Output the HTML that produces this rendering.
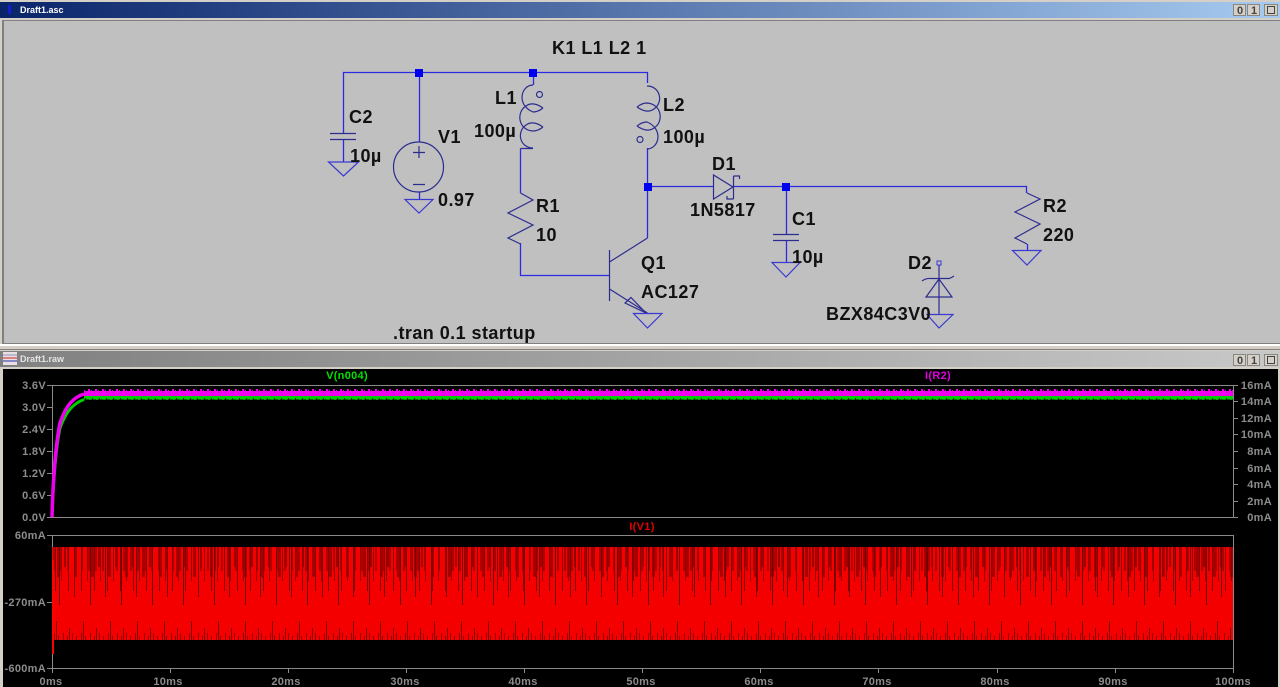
<!DOCTYPE html>
<html><head><meta charset="utf-8"><title>Draft1</title>
<style>
html,body{margin:0;padding:0;background:#d4d0c8;width:1280px;height:687px;overflow:hidden}
svg{display:block;filter:blur(.35px)}
.s{font:bold 18px "Liberation Sans",sans-serif;fill:#111;letter-spacing:.45px}
.a{font:bold 11px "Liberation Sans",sans-serif;fill:#8c8c8c;letter-spacing:.3px}
.t{font:bold 9px "Liberation Sans",sans-serif;fill:#fff}
.b{font:bold 11px "Liberation Sans",sans-serif;fill:#444;text-anchor:middle}
.w{stroke:#2a2ae0;fill:none;stroke-width:1.3}
.c{stroke:#2c2c90;fill:none;stroke-width:1.2}
.g{stroke:#3a3ad0;fill:none;stroke-width:1.2}
.j{fill:#0000f0}
.e{text-anchor:end}
.m{text-anchor:middle}
.x{stroke:#8a8a8a;fill:none;stroke-width:1}
.btn{fill:#d4d0c8;stroke:#8a8780}
</style></head><body>
<svg width="1280" height="687" viewBox="0 0 1280 687" xmlns="http://www.w3.org/2000/svg">
<defs>
<linearGradient id="t1" x1="0" x2="1" y1="0" y2="0"><stop offset="0" stop-color="#0a246a"/><stop offset="1" stop-color="#a6caf0"/></linearGradient>
<linearGradient id="t2" x1="0" x2="1" y1="0" y2="0"><stop offset="0" stop-color="#808080"/><stop offset="1" stop-color="#c8c8c8"/></linearGradient>
<pattern id="pa" patternUnits="userSpaceOnUse" x="52" y="547" width="7" height="93"><rect x="1" y="0" width="2" height="24" fill="#b00000"/></pattern>
<pattern id="pf" patternUnits="userSpaceOnUse" x="52" y="547" width="17" height="93"><rect x="5" y="0" width="3" height="30" fill="#a80000"/><rect x="12" y="0" width="2" height="20" fill="#a00000"/></pattern>
<pattern id="pb" patternUnits="userSpaceOnUse" x="52" y="547" width="13" height="93"><rect x="3" y="0" width="1" height="44" fill="#850000"/><rect x="9" y="0" width="1" height="34" fill="#950000"/></pattern>
<pattern id="pc" patternUnits="userSpaceOnUse" x="52" y="547" width="31" height="93"><rect x="7" y="0" width="1" height="58" fill="#700000"/><rect x="22" y="0" width="1" height="50" fill="#780000"/></pattern>
<pattern id="pd" patternUnits="userSpaceOnUse" x="52" y="547" width="9" height="93"><rect x="2" y="86" width="1" height="7" fill="#900000"/><rect x="6" y="89" width="1" height="4" fill="#900000"/></pattern>
<pattern id="pe" patternUnits="userSpaceOnUse" x="52" y="547" width="27" height="93"><rect x="4" y="74" width="1" height="19" fill="#800000"/><rect x="17" y="81" width="1" height="12" fill="#800000"/></pattern>
<pattern id="pm" patternUnits="userSpaceOnUse" x="52" y="388" width="7" height="13"><rect x="1" y="1" width="2" height="2" fill="#e800e8"/><rect x="4" y="2" width="1" height="1" fill="#e800e8"/><rect x="2" y="11" width="2" height="1" fill="#00a800"/><rect x="5" y="10" width="1" height="2" fill="#002800"/></pattern>
</defs>

<!-- schematic window -->
<rect x="0" y="2" width="1280" height="16" fill="url(#t1)"/>
<rect x="8" y="5" width="3" height="9" fill="#1020d0"/>
<text class="t" x="20" y="13">Draft1.asc</text>
<rect x="2" y="20" width="1278" height="325" fill="#808080"/>
<rect x="4" y="21" width="1276" height="322" fill="#c0c0c0"/>
<rect x="0" y="344" width="1280" height="2" fill="#ffffff"/>
<rect x="0" y="349" width="1280" height="1" fill="#808080"/>

<!-- title buttons -->
<rect class="btn" x="1233.5" y="4.5" width="12" height="11"/><text class="b" x="1240" y="14">0</text>
<rect class="btn" x="1247.5" y="4.5" width="12" height="11"/><text class="b" x="1254" y="14">1</text>
<rect class="btn" x="1264.5" y="4.5" width="13" height="11"/><rect x="1267.5" y="6.5" width="7" height="7" fill="none" stroke="#444"/>

<!-- wires -->
<path class="w" d="M343.5 133V72.5H647.5V83M343.5 139V162M419.5 72.5V142M533.5 72.5V85M520.5 148.5V193M520.5 243V275.5H609M647.5 148V238M647.5 186.5H713M733 186.5H1026.5V193M786.5 186.5V234M786.5 240V262M1027.5 244V250M419.5 192V199"/>

<!-- C2 -->
<path class="c" d="M330 133.5H356M330 139.5H356"/>
<path class="g" d="M328.5 162H358.5L343.5 176Z"/>
<!-- V1 -->
<circle class="c" cx="418.5" cy="167" r="25"/>
<path class="c" d="M419 146V158M413 152.5H425M413 184.5H425"/>
<path class="g" d="M405 199.5H433L419 213Z"/>
<!-- L1 -->
<path class="c" d="M533 85C521 85 516 105 533 112Q538 112 543 108M543 108Q533 101 526 106C516 112 518 130 533 131Q538 131 543 127M543 127Q533 120 526 125C516 132 520 148 533 148M520.5 148.5H533"/>
<circle class="c" cx="539.5" cy="94.5" r="3"/>
<!-- L2 -->
<path class="c" d="M647 149C659 149 664 129 647 122Q642 122 637 126M637 126Q647 133 654 128C664 122 662 104 647 103Q642 103 637 107M637 107Q647 114 654 109C664 102 660 86 647 86"/>
<circle class="c" cx="640" cy="139.5" r="3"/>
<!-- R1 -->
<path class="c" d="M520.5 193L533 200L508 213L533 225L508 238L520.5 244"/>
<!-- Q1 -->
<path class="c" d="M609.5 250V301M609.5 262L647.5 238M609.5 289L647.5 313"/>
<path class="c" d="M646 313L625 303L631 297.5Z"/>
<path class="g" d="M633.5 313.5H662L647.5 328Z"/>
<!-- D1 -->
<path class="c" d="M713.5 175V199L733 187ZM733.5 176V199M733.5 176H739.5V179M733.5 199H727V196"/>
<!-- C1 -->
<path class="c" d="M773 234.5H799M773 240.5H799"/>
<path class="g" d="M772 262.5H800L786 277Z"/>
<!-- R2 -->
<path class="c" d="M1027 193L1040 199L1015 212L1040 224L1015 238L1027 244"/>
<path class="g" d="M1012.5 250.5H1041L1027 265Z"/>
<!-- D2 -->
<rect x="937" y="261" width="4" height="4" fill="none" stroke="#3a3ad8"/>
<path class="c" d="M939 265V297M939 297V314M922 281Q926 278 931 278.5H949Q951 278 954 276M939 279L926 297H952Z"/>
<path class="g" d="M927 314.5H953L939 328Z"/>
<!-- junctions -->
<rect class="j" x="415" y="69" width="8" height="8"/>
<rect class="j" x="529" y="69" width="8" height="8"/>
<rect class="j" x="644" y="183" width="8" height="8"/>
<rect class="j" x="782" y="183" width="8" height="8"/>

<!-- schematic labels -->
<text class="s" x="552" y="54">K1 L1 L2 1</text>
<text class="s" x="349" y="123">C2</text>
<text class="s" x="350" y="162">10µ</text>
<text class="s" x="438" y="143">V1</text>
<text class="s" x="438" y="206">0.97</text>
<text class="s" x="495" y="104">L1</text>
<text class="s" x="474" y="137">100µ</text>
<text class="s" x="663" y="111">L2</text>
<text class="s" x="663" y="143">100µ</text>
<text class="s" x="712" y="170">D1</text>
<text class="s" x="690" y="216">1N5817</text>
<text class="s" x="536" y="212">R1</text>
<text class="s" x="536" y="241">10</text>
<text class="s" x="641" y="269">Q1</text>
<text class="s" x="641" y="298">AC127</text>
<text class="s" x="792" y="225">C1</text>
<text class="s" x="792" y="263">10µ</text>
<text class="s" x="1043" y="212">R2</text>
<text class="s" x="1043" y="241">220</text>
<text class="s" x="908" y="269">D2</text>
<text class="s" x="826" y="320">BZX84C3V0</text>
<text class="s" x="393" y="339">.tran 0.1 startup</text>

<!-- waveform window -->
<rect x="0" y="351" width="1280" height="16" fill="url(#t2)"/>
<rect x="3" y="352" width="14" height="13" fill="#e8e0e0"/>
<path d="M3 358H17" stroke="#d02020" stroke-width="1"/><path d="M3 361H17" stroke="#2030b0" stroke-width="1"/><path d="M3 355H17" stroke="#9090c0" stroke-width="1"/>
<text class="t" x="20" y="362" style="fill:#e4e4e4">Draft1.raw</text>
<rect class="btn" x="1233.5" y="354.5" width="12" height="11"/><text class="b" x="1240" y="364">0</text>
<rect class="btn" x="1247.5" y="354.5" width="12" height="11"/><text class="b" x="1254" y="364">1</text>
<rect class="btn" x="1264.5" y="354.5" width="13" height="11"/><rect x="1267.5" y="356.5" width="7" height="7" fill="none" stroke="#444"/>
<rect x="3" y="369" width="1275" height="318" fill="#000"/>

<!-- frames -->
<path class="x" d="M52.5 385.5H1233.5V517.5H52.5ZM52.5 535.5H1233.5V668.5H52.5Z"/>
<path class="x" d="M47 385.5H52M47 407.5H52M47 429.5H52M47 451.5H52M47 473.5H52M47 495.5H52M47 517.5H52M47 535.5H52M47 602.5H52M47 668.5H52M1233 385.5H1238M1233 401.5H1238M1233 418.5H1238M1233 434.5H1238M1233 451.5H1238M1233 468.5H1238M1233 484.5H1238M1233 501.5H1238M1233 517.5H1238M52.5 668V673M170.5 668V673M288.5 668V673M406.5 668V673M524.5 668V673M642.5 668V673M760.5 668V673M878.5 668V673M997.5 668V673M1115.5 668V673M1233.5 668V673"/>

<!-- top traces -->
<path d="M52 517C53 482 56 447 60 428C66 411 74 403 84 399.5" stroke="#00d000" stroke-width="3" fill="none"/>
<path d="M52 517C53 478 56 442 60 423C66 405 74 397 84 394" stroke="#f000f0" stroke-width="3.5" fill="none"/>
<rect x="84" y="396" width="1149" height="3.5" fill="#00d000"/>
<rect x="84" y="391" width="1149" height="5" fill="#f000f0"/>
<rect x="84" y="388" width="1149" height="13" fill="url(#pm)"/>

<!-- bottom trace -->
<rect x="52" y="547" width="1181" height="93" fill="#f40000"/>
<rect x="52" y="547" width="1181" height="93" fill="url(#pa)"/>
<rect x="52" y="547" width="1181" height="93" fill="url(#pf)"/>
<rect x="52" y="547" width="1181" height="93" fill="url(#pb)"/>
<rect x="52" y="547" width="1181" height="93" fill="url(#pc)"/>
<rect x="52" y="547" width="1181" height="93" fill="url(#pd)"/>
<rect x="52" y="547" width="1181" height="93" fill="url(#pe)"/>
<rect x="52" y="560" width="2" height="94" fill="#ff0000"/>

<!-- trace names -->
<text class="a m" x="347" y="379" style="fill:#00e000">V(n004)</text>
<text class="a m" x="938" y="379" style="fill:#e000e0">I(R2)</text>
<text class="a m" x="642" y="530" style="fill:#e00000">I(V1)</text>

<!-- axes -->
<text class="a e" x="46" y="389">3.6V</text>
<text class="a e" x="46" y="411">3.0V</text>
<text class="a e" x="46" y="433">2.4V</text>
<text class="a e" x="46" y="455">1.8V</text>
<text class="a e" x="46" y="477">1.2V</text>
<text class="a e" x="46" y="499">0.6V</text>
<text class="a e" x="46" y="521">0.0V</text>
<text class="a e" x="46" y="539">60mA</text>
<text class="a e" x="46" y="606">-270mA</text>
<text class="a e" x="46" y="672">-600mA</text>
<text class="a e" x="1272" y="389">16mA</text>
<text class="a e" x="1272" y="405">14mA</text>
<text class="a e" x="1272" y="422">12mA</text>
<text class="a e" x="1272" y="438">10mA</text>
<text class="a e" x="1272" y="455">8mA</text>
<text class="a e" x="1272" y="472">6mA</text>
<text class="a e" x="1272" y="488">4mA</text>
<text class="a e" x="1272" y="505">2mA</text>
<text class="a e" x="1272" y="521">0mA</text>
<text class="a m" x="51" y="685">0ms</text>
<text class="a m" x="168" y="685">10ms</text>
<text class="a m" x="286" y="685">20ms</text>
<text class="a m" x="405" y="685">30ms</text>
<text class="a m" x="523" y="685">40ms</text>
<text class="a m" x="641" y="685">50ms</text>
<text class="a m" x="759" y="685">60ms</text>
<text class="a m" x="877" y="685">70ms</text>
<text class="a m" x="995" y="685">80ms</text>
<text class="a m" x="1113" y="685">90ms</text>
<text class="a m" x="1233" y="685">100ms</text>
</svg>
</body></html>
